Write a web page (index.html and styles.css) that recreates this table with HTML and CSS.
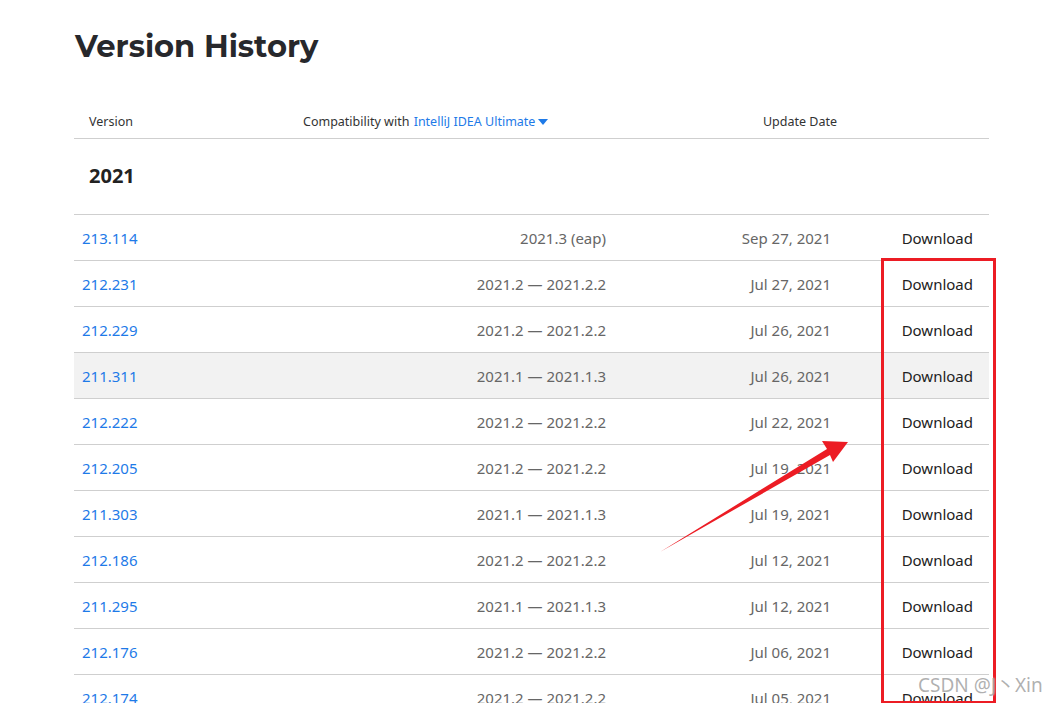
FILE: index.html
```html
<!DOCTYPE html>
<html>
<head>
<meta charset="utf-8">
<link rel="stylesheet" href="styles.css">
</head>
<body>
<main class="page">
  <h1 class="title">Version History</h1>
  <div class="table">
    <div class="row head">
      <div class="c-ver h-ver">Version</div>
      <div class="c-comp h-comp">Compatibility with <span class="link">IntelliJ IDEA Ultimate</span><span class="caret"></span></div>
      <div class="c-date h-date">Update Date</div>
      <div class="c-dl"></div>
    </div>
    <div class="year">2021</div>
    <div class="row"><div class="c-ver link">213.114</div><div class="c-comp">2021.3 (eap)</div><div class="c-date">Sep 27, 2021</div><div class="c-dl">Download</div></div>
    <div class="row"><div class="c-ver link">212.231</div><div class="c-comp">2021.2 — 2021.2.2</div><div class="c-date">Jul 27, 2021</div><div class="c-dl">Download</div></div>
    <div class="row"><div class="c-ver link">212.229</div><div class="c-comp">2021.2 — 2021.2.2</div><div class="c-date">Jul 26, 2021</div><div class="c-dl">Download</div></div>
    <div class="row hover"><div class="c-ver link">211.311</div><div class="c-comp">2021.1 — 2021.1.3</div><div class="c-date">Jul 26, 2021</div><div class="c-dl">Download</div></div>
    <div class="row"><div class="c-ver link">212.222</div><div class="c-comp">2021.2 — 2021.2.2</div><div class="c-date">Jul 22, 2021</div><div class="c-dl">Download</div></div>
    <div class="row"><div class="c-ver link">212.205</div><div class="c-comp">2021.2 — 2021.2.2</div><div class="c-date">Jul 19, 2021</div><div class="c-dl">Download</div></div>
    <div class="row"><div class="c-ver link">211.303</div><div class="c-comp">2021.1 — 2021.1.3</div><div class="c-date">Jul 19, 2021</div><div class="c-dl">Download</div></div>
    <div class="row"><div class="c-ver link">212.186</div><div class="c-comp">2021.2 — 2021.2.2</div><div class="c-date">Jul 12, 2021</div><div class="c-dl">Download</div></div>
    <div class="row"><div class="c-ver link">211.295</div><div class="c-comp">2021.1 — 2021.1.3</div><div class="c-date">Jul 12, 2021</div><div class="c-dl">Download</div></div>
    <div class="row"><div class="c-ver link">212.176</div><div class="c-comp">2021.2 — 2021.2.2</div><div class="c-date">Jul 06, 2021</div><div class="c-dl">Download</div></div>
    <div class="row"><div class="c-ver link">212.174</div><div class="c-comp">2021.2 — 2021.2.2</div><div class="c-date">Jul 05, 2021</div><div class="c-dl">Download</div></div>
  </div>
</main>
<div class="redbox"></div>
<svg class="arrow" width="1058" height="703" viewBox="0 0 1058 703">
  <path d="M660 552 L827 449 L822 441 L848 442 L833 462 L830 455 Z" fill="#ec1c24"/>
</svg>
<div class="watermark">CSDN @J丶Xin</div>
</body>
</html>
```
FILE: styles.css
```css
html, body {
  margin: 0;
  padding: 0;
  background: #fff;
  overflow: hidden;
}
body {
  width: 1058px;
  height: 703px;
  position: relative;
  font-family: "Noto Sans", "Noto Sans CJK SC", sans-serif;
  color: #222;
}
.page {
  padding: 26px 69px 0 74px;
}
.title {
  margin: 0 0 0 1px;
  font-family: "Montserrat", "Open Sans", sans-serif;
  font-weight: 700;
  font-size: 30.6px;
  line-height: 40px;
  color: #27282c;
}
.table {
  margin-top: 41px;
  width: 915px;
}
.row {
  display: grid;
  grid-template-columns: 200px 340px 224px 151px;
  height: 45px;
  align-items: center;
  border-bottom: 1px solid #cfcfcf;
  font-size: 15px;
}
.row.hover {
  background: #f2f2f2;
}
.row.head {
  height: 25px;
  line-height: 17px;
  font-size: 12.5px;
  color: #333;
  align-items: start;
  padding-top: 6px;
  box-sizing: content-box;
}
.c-ver {
  padding-left: 8px;
}
.c-comp {
  text-align: right;
  padding-right: 8px;
  color: #666;
}
.c-date {
  text-align: right;
  padding-right: 7px;
  color: #666;
}
.c-dl {
  text-align: right;
  padding-right: 16px;
  color: #222;
}
.link {
  color: #1e7ae8;
}
.h-ver {
  padding-left: 15px;
}
.h-comp {
  text-align: left;
  padding-left: 29px;
  color: #333;
  white-space: nowrap;
}
.h-comp .link {
  margin-left: 1px;
}
.caret {
  display: inline-block;
  width: 0;
  height: 0;
  border-left: 5px solid transparent;
  border-right: 5px solid transparent;
  border-top: 6px solid #1e7ae8;
  margin-left: 3px;
  vertical-align: 1px;
}
.h-date {
  text-align: right;
  padding-right: 1px;
  color: #333;
}
.year {
  height: 76px;
  line-height: 74px;
  padding-left: 15px;
  font-size: 20px;
  font-weight: 700;
  color: #222;
  border-bottom: 1px solid #cfcfcf;
  box-sizing: border-box;
}
.redbox {
  position: absolute;
  left: 881px;
  top: 258px;
  width: 109px;
  height: 440px;
  border: 3px solid #ec1c24;
}
.arrow {
  position: absolute;
  left: 0;
  top: 0;
  pointer-events: none;
}
.watermark {
  position: absolute;
  left: 918px;
  top: 670px;
  font-size: 19px;
  color: rgba(150, 150, 150, 0.75);
  font-family: "Noto Sans", "Noto Sans CJK SC", sans-serif;
  text-shadow: 0 0 2px #fff;
}
```
